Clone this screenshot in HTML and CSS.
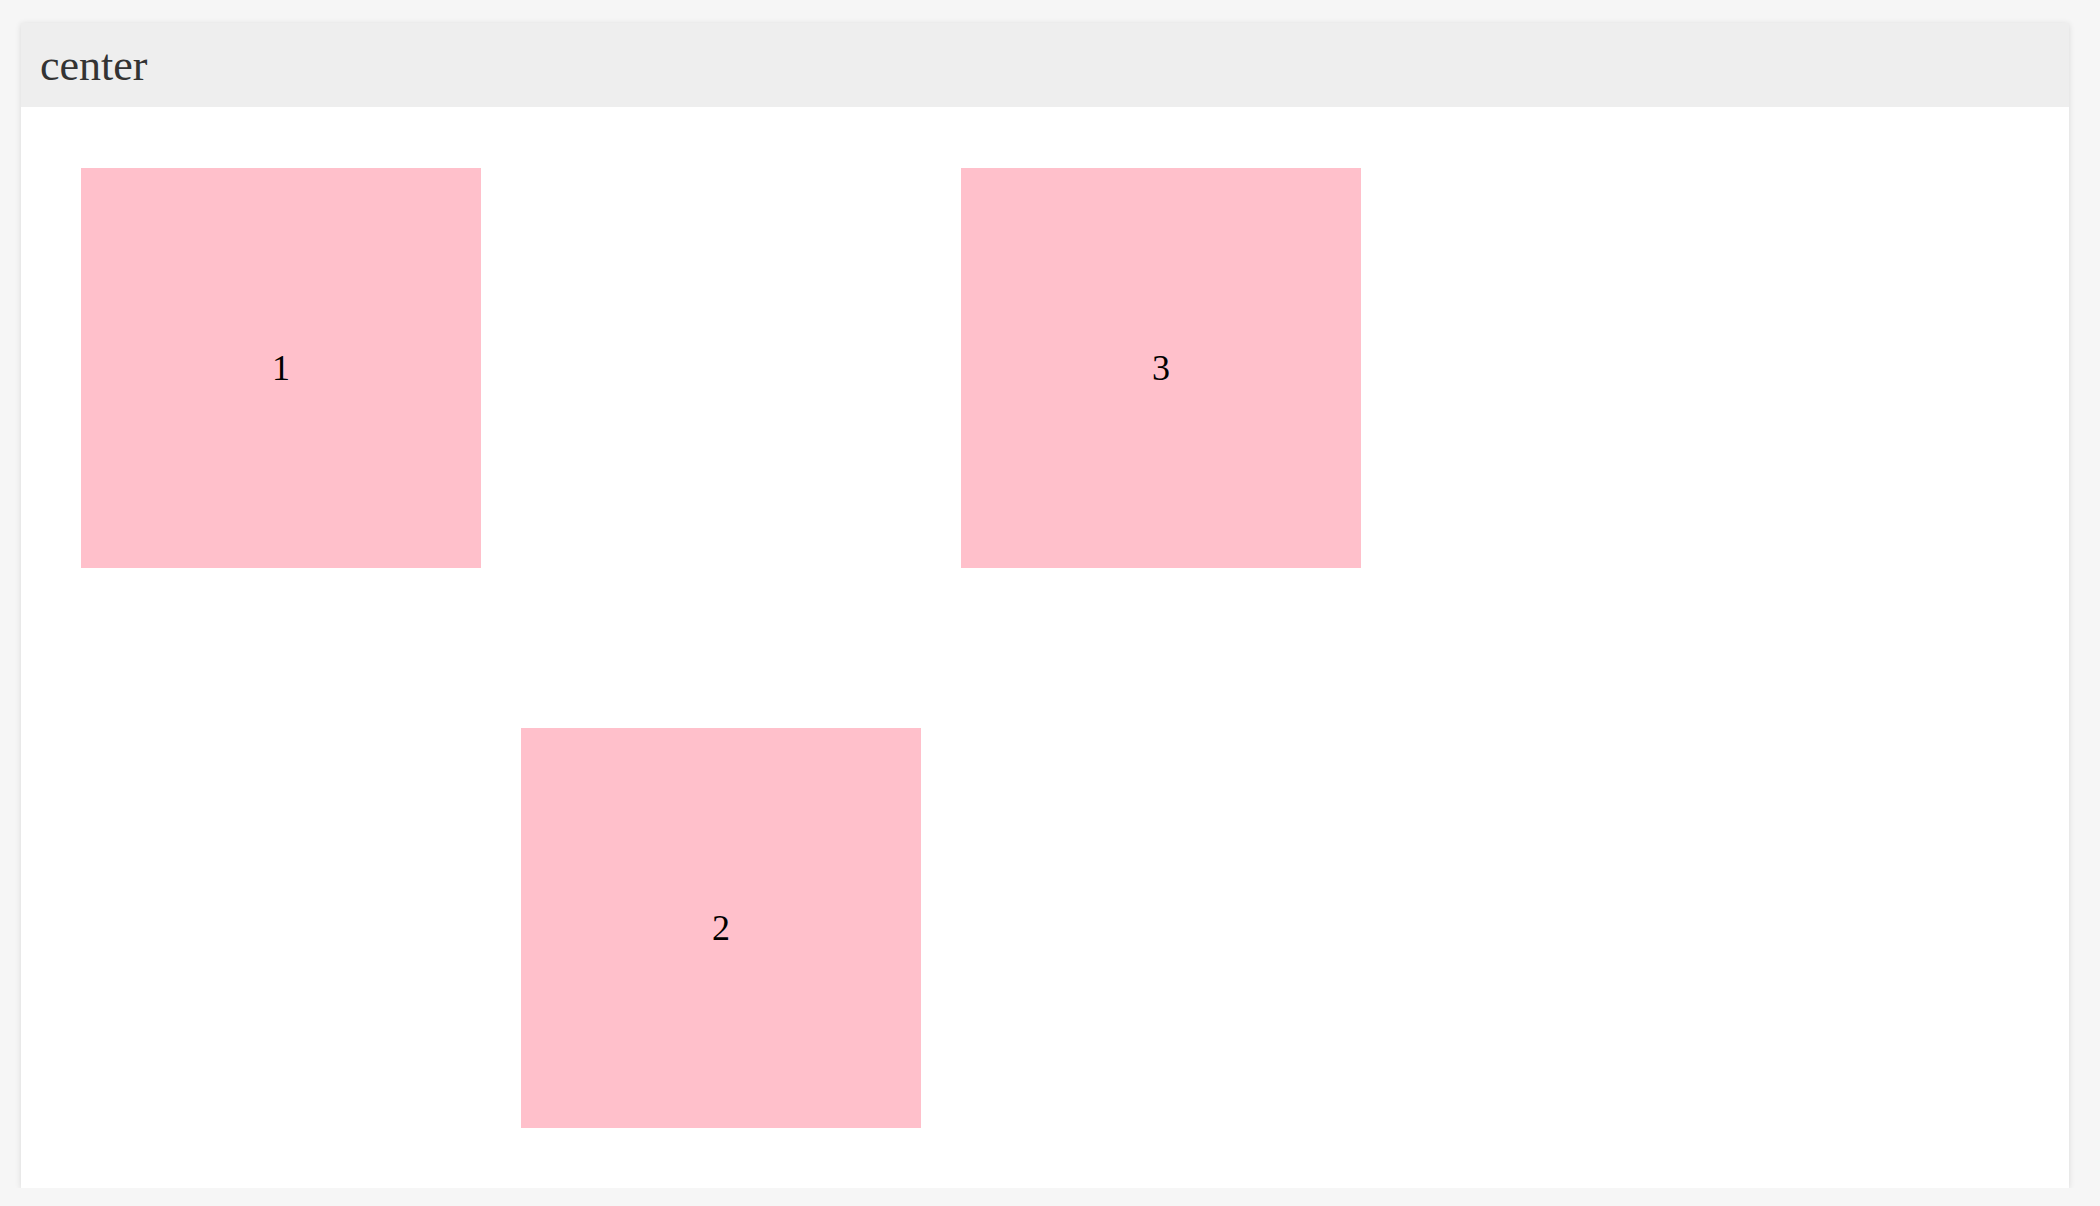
FILE: index.html
```html
<!DOCTYPE html>
<html>
<head>
<meta charset="utf-8">
<link rel="stylesheet" href="styles.css">
</head>
<body>
<div class="card">
  <div class="card-header">center</div>
  <div class="card-body">
    <div class="grid">
      <div class="box box-1">1</div>
      <div class="box box-2">2</div>
      <div class="box box-3">3</div>
    </div>
  </div>
</div>
</body>
</html>
```
FILE: styles.css
```css
html, body {
  margin: 0;
  padding: 0;
  background: #f6f6f6;
  font-family: "Liberation Serif", "Times New Roman", serif;
}
.card {
  width: 2048px;
  margin: 23px 0 0 21px;
  background: #ffffff;
  box-shadow: 0 1px 6px rgba(0, 0, 0, 0.12);
}
.card-header {
  height: 84px;
  display: flex;
  align-items: center;
  padding-left: 19px;
  background: #eeeeee;
  color: #333333;
  font-size: 44px;
}
.card-body {
  padding: 61px 60px 60px 60px;
}
.grid {
  display: grid;
  grid-template-columns: repeat(3, 400px);
  grid-template-rows: 400px 400px;
  column-gap: 40px;
  row-gap: 160px;
}
.box {
  background: pink;
  color: #000;
  font-size: 36px;
  display: flex;
  align-items: center;
  justify-content: center;
}
.box-1 { grid-column: 1; grid-row: 1; }
.box-2 { grid-column: 2; grid-row: 2; }
.box-3 { grid-column: 3; grid-row: 1; }
```
